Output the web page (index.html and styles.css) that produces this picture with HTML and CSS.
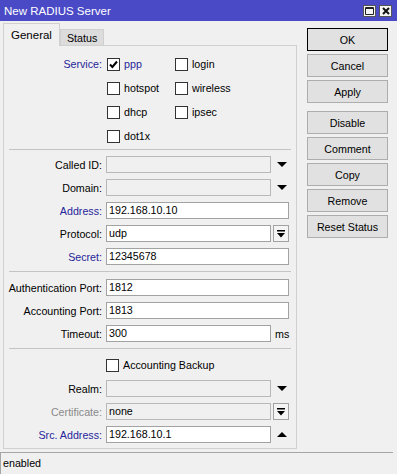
FILE: index.html
```html
<!DOCTYPE html>
<html lang="en">
<head>
  <meta charset="UTF-8">
  <title>New RADIUS Server</title>
  <link rel="stylesheet" href="styles.css">
</head>
<body>
  <div class="window">
    <div class="titlebar">
      <span class="title">New RADIUS Server</span>
      <div class="title-buttons">
        <span class="tb-btn">
          <svg width="9" height="8" viewBox="0 0 9 8"><path d="M0.5 0.5h8v7h-8z M0.5 1.5h8" stroke="#222" fill="none"/></svg>
        </span>
        <span class="tb-btn">
          <svg width="8" height="8" viewBox="0 0 8 8"><path d="M1 1l6 6M7 1l-6 6" stroke="#111" stroke-width="2" fill="none"/></svg>
        </span>
      </div>
    </div>

    <div class="body">
      <div class="main">
        <div class="tabs">
          <div class="tab active">General</div>
          <div class="tab">Status</div>
        </div>

        <div class="panel">
          <div class="services">
            <div class="label blue">Service:</div>
            <div class="checks">
              <div class="check blue"><span class="box"><svg width="9" height="9" viewBox="0 0 9 9"><path d="M1 4.5l2.4 2.5L8 1.5" stroke="#000" stroke-width="2" fill="none"/></svg></span>ppp</div>
              <div class="check"><span class="box"></span>login</div>
              <div class="check"><span class="box"></span>hotspot</div>
              <div class="check"><span class="box"></span>wireless</div>
              <div class="check"><span class="box"></span>dhcp</div>
              <div class="check"><span class="box"></span>ipsec</div>
              <div class="check"><span class="box"></span>dot1x</div>
            </div>
          </div>

          <div class="sep"></div>

          <div class="row">
            <div class="label">Called ID:</div>
            <div class="input w-drop disabled"></div>
            <span class="arrow"><svg width="10" height="5" viewBox="0 0 10 5"><path d="M0 0h10L5 5z"/></svg></span>
          </div>
          <div class="row">
            <div class="label">Domain:</div>
            <div class="input w-drop disabled"></div>
            <span class="arrow"><svg width="10" height="5" viewBox="0 0 10 5"><path d="M0 0h10L5 5z"/></svg></span>
          </div>
          <div class="row">
            <div class="label blue">Address:</div>
            <div class="input w-full">192.168.10.10</div>
          </div>
          <div class="row">
            <div class="label">Protocol:</div>
            <div class="input w-drop">udp</div>
            <span class="dropbtn"><svg width="8" height="8" viewBox="0 0 8 8"><path d="M0 0h8v1.5H0z M0 3h8L4 7.5z"/></svg></span>
          </div>
          <div class="row">
            <div class="label blue">Secret:</div>
            <div class="input w-full">12345678</div>
          </div>

          <div class="sep sep-mid"></div>

          <div class="row">
            <div class="label">Authentication Port:</div>
            <div class="input w-full">1812</div>
          </div>
          <div class="row">
            <div class="label">Accounting Port:</div>
            <div class="input w-full">1813</div>
          </div>
          <div class="row">
            <div class="label">Timeout:</div>
            <div class="input w-drop">300</div>
            <span class="unit">ms</span>
          </div>

          <div class="sep sep-mid"></div>

          <div class="backup">
            <div class="check"><span class="box"></span>Accounting Backup</div>
          </div>
          <div class="row">
            <div class="label">Realm:</div>
            <div class="input w-drop disabled"></div>
            <span class="arrow"><svg width="10" height="5" viewBox="0 0 10 5"><path d="M0 0h10L5 5z"/></svg></span>
          </div>
          <div class="row">
            <div class="label grey">Certificate:</div>
            <div class="input w-drop disabled">none</div>
            <span class="dropbtn"><svg width="8" height="8" viewBox="0 0 8 8"><path d="M0 0h8v1.5H0z M0 3h8L4 7.5z"/></svg></span>
          </div>
          <div class="row">
            <div class="label blue">Src. Address:</div>
            <div class="input w-drop">192.168.10.1</div>
            <span class="arrow"><svg width="10" height="5" viewBox="0 0 10 5"><path d="M0 5h10L5 0z"/></svg></span>
          </div>
        </div>
      </div>

      <div class="actions">
        <button class="btn default">OK</button>
        <button class="btn">Cancel</button>
        <button class="btn gap">Apply</button>
        <button class="btn">Disable</button>
        <button class="btn">Comment</button>
        <button class="btn">Copy</button>
        <button class="btn">Remove</button>
        <button class="btn">Reset Status</button>
      </div>
    </div>

    <div class="statusbar">enabled</div>
  </div>
</body>
</html>
```

FILE: styles.css
```css
body {
  margin: 0;
  padding: 0;
  background-color: #f0f0f0;
  font-family: "Liberation Sans", Arial, sans-serif;
  font-size: 10.7px;
  color: #000;
}
.window {
  width: 397px;
  height: 474px;
  display: flex;
  flex-direction: column;
  background-color: #f0f0f0;
}
.titlebar {
  height: 21px;
  flex: none;
  display: flex;
  align-items: center;
  justify-content: space-between;
  background-color: #4a4ac6;
  color: #fff;
  padding: 0 5px 0 4px;
  box-sizing: border-box;
}
.title {
  font-size: 11.5px;
}
.title-buttons {
  display: flex;
  gap: 3px;
}
.tb-btn {
  width: 13px;
  height: 12px;
  box-sizing: border-box;
  border: 1px solid #555;
  background: #f4f4f4;
  display: flex;
  align-items: center;
  justify-content: center;
}
.body {
  height: 431px;
  flex: none;
  display: flex;
  gap: 10px;
  padding-left: 3px;
}
.main {
  width: 294px;
  padding-top: 3px;
  display: flex;
  flex-direction: column;
}
.tabs {
  display: flex;
  align-items: flex-end;
  height: 22px;
  margin-bottom: -1px;
}
.tab {
  height: 17px;
  box-sizing: border-box;
  padding: 0 6px;
  line-height: 17px;
  border: 1px solid #d0d0d0;
  border-bottom: none;
  background: #dcdcdc;
}
.tab.active {
  position: relative;
  z-index: 1;
  height: 23px;
  line-height: 22px;
  padding: 0 7px;
  background: #f0f0f0;
  font-size: 11.5px;
}
.panel {
  height: 404px;
  box-sizing: border-box;
  border: 1px solid #d0d0d0;
  padding-top: 6px;
}
.label {
  width: 98px;
  flex: none;
  text-align: right;
  margin-right: 4px;
  white-space: nowrap;
}
.blue {
  color: #26269a;
}
.grey {
  color: #8a8a8a;
}
.services {
  display: flex;
  align-items: flex-start;
}
.services .label {
  line-height: 24px;
}
.checks {
  display: grid;
  grid-template-columns: 68px 68px;
  grid-auto-rows: 24px;
  margin-left: 1px;
}
.check {
  display: flex;
  align-items: center;
  gap: 4px;
}
.box {
  width: 13px;
  height: 13px;
  box-sizing: border-box;
  border: 1px solid #333;
  background: #fff;
  display: flex;
  align-items: center;
  justify-content: center;
}
.sep {
  height: 0;
  border-top: 1px solid #c4c4c4;
  margin: 1px 5px 3px 5px;
}
.sep.sep-mid {
  margin: 3px 5px 4px 5px;
}
.row {
  height: 23px;
  display: flex;
  align-items: center;
}
.input {
  height: 17px;
  box-sizing: border-box;
  border: 1px solid #a2a2a2;
  background: #fff;
  padding: 0 2px;
  line-height: 15px;
  white-space: nowrap;
}
.input.disabled {
  background: #f0f0f0;
  border-color: #b8b8b8;
}
.w-full {
  width: 183px;
}
.w-drop {
  width: 165px;
}
.arrow {
  display: flex;
  align-items: center;
  padding-left: 6px;
}
.dropbtn {
  width: 16px;
  height: 17px;
  box-sizing: border-box;
  margin-left: 2px;
  border: 1px solid #a2a2a2;
  background: #f4f4f4;
  display: flex;
  align-items: center;
  justify-content: center;
}
.unit {
  margin-left: 4px;
}
.backup {
  height: 24px;
  display: flex;
  align-items: center;
  padding-left: 102px;
}
.actions {
  width: 81px;
  padding-top: 7px;
  display: flex;
  flex-direction: column;
  gap: 3px;
}
.btn {
  width: 81px;
  height: 23px;
  padding: 0;
  font-family: "Liberation Sans", Arial, sans-serif;
  font-size: 10.7px;
  color: #000;
  background: #e1e1e1;
  border: 1px solid #adadad;
  border-radius: 0;
}
.btn.default {
  border-color: #000;
}
.btn.gap {
  margin-bottom: 5px;
}
.statusbar {
  margin-top: 0;
  width: 393px;
  height: 22px;
  box-sizing: border-box;
  border-top: 1px solid #a6a6a6;
  border-left: 1px solid #a6a6a6;
  padding-left: 2px;
  line-height: 21px;
}
```
